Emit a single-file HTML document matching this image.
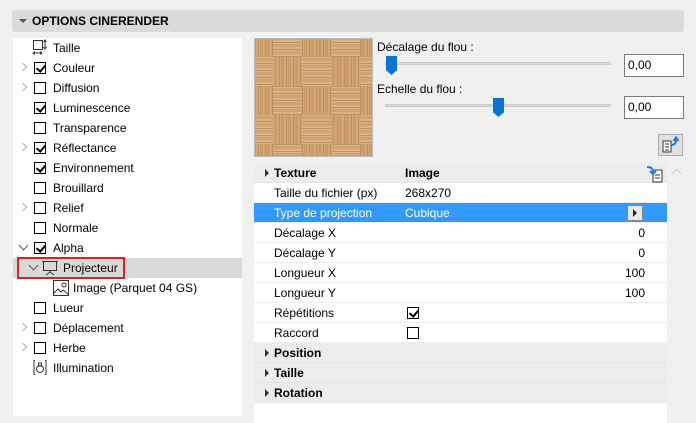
<!DOCTYPE html>
<html><head><meta charset="utf-8"><style>
*{margin:0;padding:0;box-sizing:border-box}
body{width:696px;height:416px;background:#f0f0f0;font-family:"Liberation Sans",sans-serif;font-size:12px;color:#000;position:relative;overflow:hidden}
.abs{position:absolute}
.hdr{left:12px;top:10px;width:672px;height:22px;background:#dadada;border-radius:3px;font-weight:bold;font-size:12px;line-height:22px;padding-left:20px}
.hdr:before{content:"";position:absolute;left:7px;top:9px;border:4px solid transparent;border-top:4px solid #555;border-bottom:0}
.left{left:13px;top:38px;width:229px;height:378px;background:#fff}
.row{position:absolute;left:0;width:229px;height:20px;line-height:20px}
.cb{position:absolute;left:21px;top:4px;width:12px;height:12px;border:1px solid #000;background:#fff}
.cb.c:after{content:"";position:absolute;left:3px;top:0px;width:4px;height:7px;border:solid #000;border-width:0 2px 2px 0;transform:rotate(40deg)}
.lbl{position:absolute;left:40px}
.car{position:absolute;left:7px;top:6px;width:6px;height:6px;border:solid #aaa;border-width:1.5px 1.5px 0 0;transform:rotate(45deg)}
.dn{position:absolute;left:7px;top:4px;width:7px;height:7px;border:solid #555;border-width:0 1.5px 1.5px 0;transform:rotate(45deg)}
.tb{left:254px;top:163px;width:413px}
.tr{position:relative;height:20px;line-height:20px;border-bottom:1px solid #ececec;background:#fff}
.tr.g{background:#ececec;font-weight:bold;border-bottom:1px solid #e4e4e4}
.tr.g:before{content:"";position:absolute;left:11px;top:6px;border:4px solid transparent;border-left:4px solid #333;border-right:0}
.k{position:absolute;left:20px}
.v{position:absolute;left:151px}
.n{position:absolute;right:22px}
.inp{width:60px;height:23px;border:1px solid #7a7a7a;background:#fff;line-height:21px;padding-left:3px}
.track{height:3px;background:#dcdcdc;border:1px solid #ccc}
.thumb{width:11px;height:19px;background:#0a74d6;clip-path:polygon(0 0,100% 0,100% 75%,50% 100%,0 75%)}
</style></head><body>
<div class="abs hdr">OPTIONS CINERENDER</div>
<div class="abs left">
 <div class="row" style="top:0"><svg class="abs" style="left:19px;top:1px" width="16" height="18"><rect x="1.5" y="1.5" width="9" height="9" fill="none" stroke="#333"/><path d="M13 1v9M11.5 3l1.5-2 1.5 2M11.5 8l1.5 2 1.5-2M1 14h9M3 12.5l-2 1.5 2 1.5M8 12.5l2 1.5-2 1.5" stroke="#333" fill="none"/></svg><span class="lbl">Taille</span></div>
 <div class="row" style="top:20px"><i class="car"></i><i class="cb c"></i><span class="lbl">Couleur</span></div>
 <div class="row" style="top:40px"><i class="car"></i><i class="cb"></i><span class="lbl">Diffusion</span></div>
 <div class="row" style="top:60px"><i class="cb c"></i><span class="lbl">Luminescence</span></div>
 <div class="row" style="top:80px"><i class="cb"></i><span class="lbl">Transparence</span></div>
 <div class="row" style="top:100px"><i class="car"></i><i class="cb c"></i><span class="lbl">Réflectance</span></div>
 <div class="row" style="top:120px"><i class="cb c"></i><span class="lbl">Environnement</span></div>
 <div class="row" style="top:140px"><i class="cb"></i><span class="lbl">Brouillard</span></div>
 <div class="row" style="top:160px"><i class="car"></i><i class="cb"></i><span class="lbl">Relief</span></div>
 <div class="row" style="top:180px"><i class="cb"></i><span class="lbl">Normale</span></div>
 <div class="row" style="top:200px"><i class="dn"></i><i class="cb c"></i><span class="lbl">Alpha</span></div>
 <div class="row" style="top:220px;background:#d9d9d9"><div class="abs" style="left:4px;top:-1px;width:108px;height:22px;border:2px solid #e02020"></div><i class="dn" style="left:17px"></i><svg class="abs" style="left:29px;top:2px" width="16" height="16"><rect x="1.5" y="1.5" width="13" height="9" fill="none" stroke="#333"/><path d="M0 1.5h16M8 10.5v2M4 15l4-3 4 3" stroke="#333" fill="none"/></svg><span class="lbl" style="left:50px">Projecteur</span></div>
 <div class="row" style="top:240px"><svg class="abs" style="left:40px;top:2px" width="16" height="16"><rect x="0.5" y="0.5" width="15" height="15" fill="#fff" stroke="#333"/><path d="M1 13l4-4 3 3 2-2 5 4" stroke="#333" fill="none"/><circle cx="11" cy="5" r="2" fill="none" stroke="#333"/></svg><span class="lbl" style="left:60px">Image (Parquet 04 GS)</span></div>
 <div class="row" style="top:260px"><i class="cb"></i><span class="lbl">Lueur</span></div>
 <div class="row" style="top:280px"><i class="car"></i><i class="cb"></i><span class="lbl">Déplacement</span></div>
 <div class="row" style="top:300px"><i class="car"></i><i class="cb"></i><span class="lbl">Herbe</span></div>
 <div class="row" style="top:320px"><svg class="abs" style="left:20px;top:1px" width="14" height="17"><path d="M2 1.5H1v14h1M12 1.5h1v14h-1" stroke="#333" fill="none"/><circle cx="7" cy="10" r="3.5" fill="none" stroke="#333"/><path d="M5.5 4h3v3h-3z" fill="none" stroke="#333"/></svg><span class="lbl">Illumination</span></div>
</div>
<svg class="abs" style="left:254px;top:38px" width="119" height="119">
<defs>
<pattern id="v" width="7" height="29" patternUnits="userSpaceOnUse"><rect width="7" height="29" fill="#d4a874"/><rect x="2" width="3" height="29" fill="#c99c69"/><rect width="1" height="29" fill="#b98e60"/></pattern>
<pattern id="h" width="29" height="7" patternUnits="userSpaceOnUse"><rect width="29" height="7" fill="#dab283"/><rect y="2" width="29" height="3" fill="#cfa473"/><rect height="1" width="29" fill="#bd9264"/></pattern>
<pattern id="bw" width="58" height="58" patternUnits="userSpaceOnUse" x="-10" y="-10"><rect width="29" height="29" fill="url(#v)"/><rect x="29" width="29" height="29" fill="url(#h)"/><rect y="29" width="29" height="29" fill="url(#h)"/><rect x="29" y="29" width="29" height="29" fill="url(#v)"/></pattern>
</defs>
<rect x="0.5" y="0.5" width="118" height="118" fill="url(#bw)" stroke="#bbb"/>
</svg>
<div class="abs" style="left:377px;top:40px">Décalage du flou :</div>
<div class="abs track" style="left:385px;top:62px;width:226px"></div>
<div class="abs thumb" style="left:386px;top:56px"></div>
<div class="abs inp" style="left:624px;top:54px">0,00</div>
<div class="abs" style="left:377px;top:82px">Echelle du flou :</div>
<div class="abs track" style="left:385px;top:104px;width:226px"></div>
<div class="abs thumb" style="left:493px;top:98px"></div>
<div class="abs inp" style="left:624px;top:96px">0,00</div>
<div class="abs" style="left:658px;top:134px;width:25px;height:22px;background:#e0e0e0;border:1px solid #aaa"><svg width="23" height="20"><path d="M4 6h8v11H4z" fill="#fff" stroke="#333"/><path d="M6 9h4M6 12h4M6 15h4" stroke="#333"/><path d="M12 10c4 0 5-2 5-6M14.5 6l2.5-3.5 2.5 3.5" stroke="#1a7be0" stroke-width="2" fill="none"/></svg></div>
<div class="abs tb">
 <div class="tr g"><span class="k">Texture</span><span class="v">Image</span><svg class="abs" style="left:392px;top:2px" width="18" height="18"><path d="M7 5h9v12H7z" fill="#fff" stroke="#333"/><path d="M9 10h5M9 13h5" stroke="#333"/><path d="M1 2c4 0 6 1 6 6M4 6l3 3 3-3" stroke="#1a7be0" stroke-width="2" fill="none"/></svg></div>
 <div class="tr"><span class="k">Taille du fichier (px)</span><span class="v">268x270</span></div>
 <div class="tr" style="background:#3399ff;color:#fff"><span class="k">Type de projection</span><span class="v">Cubique</span><div class="abs" style="left:373px;top:2px;width:16px;height:16px;background:#e8e8e8;border:1px solid #888"><i class="abs" style="left:5px;top:3px;border:4px solid transparent;border-left:4px solid #222;border-right:0"></i></div></div>
 <div class="tr"><span class="k">Décalage X</span><span class="n">0</span></div>
 <div class="tr"><span class="k">Décalage Y</span><span class="n">0</span></div>
 <div class="tr"><span class="k">Longueur X</span><span class="n">100</span></div>
 <div class="tr"><span class="k">Longueur Y</span><span class="n">100</span></div>
 <div class="tr"><span class="k">Répétitions</span><i class="cb c" style="left:153px"></i></div>
 <div class="tr"><span class="k">Raccord</span><i class="cb" style="left:153px"></i></div>
 <div class="tr g"><span class="k">Position</span></div>
 <div class="tr g"><span class="k">Taille</span></div>
 <div class="tr g"><span class="k">Rotation</span></div>
 <div style="height:20px;background:#fff"></div>
</div>
<div class="abs" style="left:673px;top:170px;width:7px;height:7px;border:solid #ccc;border-width:1.5px 0 0 1.5px;transform:rotate(45deg)"></div>
</body></html>
